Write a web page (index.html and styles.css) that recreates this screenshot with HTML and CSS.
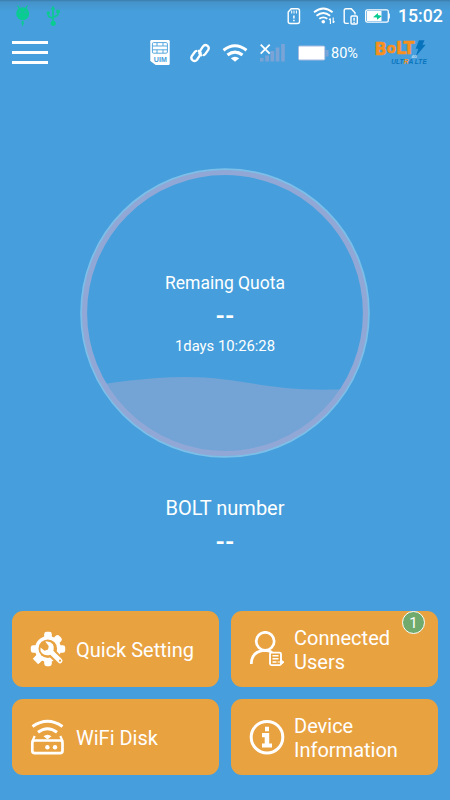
FILE: index.html
```html
<!DOCTYPE html>
<html lang="en">
<head>
<meta charset="utf-8">
<title>BOLT</title>
<link rel="stylesheet" href="styles.css">
</head>
<body>
<div class="status">
  <div class="status-left">
    <svg width="14" height="24" viewBox="16 4 14 24" fill="#0acb91"><circle cx="22.7" cy="13.7" r="6.5"/><path d="M17.5 5.5l2.5 4M27.5 5.5l-2.5 4" stroke="#0acb91" stroke-width="1.2"/><path d="M18.7 12h2.6M24 12h2.6" stroke="#469fdc" stroke-opacity=".6"/><path d="M21.5 21h2.2v3l-1 2.5-1-2.5z"/></svg>
    <svg width="14" height="24" viewBox="46 4 14 24" fill="none" stroke="#0acb91" stroke-width="1.7"><path d="M53 8v14M48.3 13v2.2q0 1.8 4.7 3M58 12v2q0 2-5 3"/><g fill="#0acb91" stroke="none"><circle cx="53.2" cy="23.3" r="2.6"/><circle cx="48.3" cy="13" r="1.7"/><path d="M56.3 9.7h3.5V13h-3.5zM53 5.7l2.4 3.7h-4.8z"/></g></svg>
  </div>
  <div class="status-right">
    <svg class="s-sd" width="14" height="18" viewBox="287 7 14 18" fill="none" stroke="#fff" stroke-width="1.4"><path d="M291.2 8.7h6.3q2 0 2 2v10.8q0 2-2 2h-7.3q-2 0-2-2V12z"/><path d="M291.7 10.5v3M294 10.5v3M296.4 10.5v3" stroke-width="1"/><path d="M293.9 15.5v3M293.9 19.8v1.4" stroke-width="1.5"/></svg>
    <svg class="s-wifi" width="22" height="18" viewBox="313 7 22 18" fill="none" stroke="#fff" stroke-width="1.8"><path d="M314 12.3q9.3-7.5 18.6 0M316.5 15.7q6.8-5.5 13.6 0M319.3 18.8q4-3 8 0"/><circle cx="323.3" cy="21.7" r="1.8" fill="#fff" stroke="none"/><path d="M330.4 24v-5.5M333.2 17.5v5.5M329 20l1.4-1.7M334.5 21.3l-1.3 1.6" stroke-width="1.1"/></svg>
    <svg class="s-sim" width="16" height="18" viewBox="343 7 16 18" fill="none" stroke="#fff" stroke-width="1.4"><path d="M348.8 23.4H346q-1.8 0-1.8-1.8v-11q0-1.8 1.8-1.8h5.3l3.7 4v1.6"/><rect x="351" y="16" width="6.3" height="8" rx="1"/><path d="M354.1 17.7v3M354.1 21.7v1.2"/></svg>
    <svg class="s-bat" width="26" height="15" viewBox="365 9 26 15"><rect x="365.7" y="9.8" width="22.6" height="12.4" rx="1.7" fill="none" stroke="#fff" stroke-width="1.3"/><path d="M367 11h14.5v10H367z" fill="#fff"/><path d="M388.6 13.5h1.2v5h-1.2z" fill="#fff"/><path d="M373 17.2l5-4.3v2.2l4 .8-5 3.8v-2.2z" fill="#0acb91"/></svg>
    <span class="time">15:02</span>
  </div>
</div>
<header class="bar">
  <div class="menu"><i></i><i></i><i></i></div>
  <div class="icons">
    <svg class="i-uim" width="20" height="26" viewBox="150 40 20 26"><path d="M151.5 40h17q1.2 0 1.2 1.2v22.6q0 1.2-1.2 1.2h-12.8l-5.4-4V41.2q0-1.2 1.2-1.2z" fill="#fff"/><g fill="none" stroke="#469fdc" stroke-width=".9"><rect x="152.4" y="42.6" width="15" height="10.6" rx="1.2"/><path d="M152.4 46h15M152.4 49.8h15M157 42.6v3.4M163 42.6v3.4M157 49.8v3.4M163 49.8v3.4"/></g><text class="uim" x="160.3" y="61.8" text-anchor="middle" textLength="13" lengthAdjust="spacingAndGlyphs">UIM</text></svg>
    <svg class="i-link" width="20" height="20" viewBox="190 43 20 20" fill="none" stroke="#fff" stroke-width="2.3" stroke-linecap="round"><path d="M201.3 55.2q-3.2-1.3-1.2-4.4l2.9-4.4q1.9-2.3 4.3-.7 2.3 1.8.9 4.2l-3 4.2q-.5.7-1.4 1"/><path d="M198.7 50.9q3.2 1.3 1.2 4.4l-2.9 4.4q-1.9 2.3-4.3.7-2.3-1.8-.9-4.2l3-4.2q.5-.7 1.4-1"/></svg>
    <svg class="i-wifi" width="26" height="18" viewBox="222 44 26 18" fill="none" stroke="#fff" stroke-width="3"><path d="M223.5 50.2q11.5-8.8 23 0M227.5 55q7.5-5.8 15 0"/><path d="M230.8 58.2q4.2-3 8.4 0l-4.2 3.6z" fill="#fff" stroke="none"/></svg>
    <svg class="i-signal" width="26" height="18" viewBox="259 44 26 18"><path d="M260 58h3.5v3.5H260zM265.3 55.4h3.7v6.1h-3.7zM270.5 51h3.7v10.5h-3.7zM275.7 47.5h3.7v14h-3.7zM281.2 44h3.6v17.5h-3.6z" fill="#7aa4d6"/><path d="M260.7 44.7l9 9M269.7 44.7l-9 9" stroke="#fff" stroke-width="1.8"/></svg>
    <svg class="i-bat" width="31" height="16" viewBox="298 44 31 16"><rect x="298" y="44.5" width="27.3" height="15" rx="2" fill="#a7badf"/><path d="M299 45.5h25.3v13H299z" fill="#fff"/><path d="M325.5 49h3v6.5h-3z" fill="#7aa4d6"/></svg>
    <span class="pct">80%</span>
    <svg class="i-logo" width="56" height="28" viewBox="373 39 56 28"><text class="bolt" x="374.5" y="54.5" textLength="40" lengthAdjust="spacingAndGlyphs"><tspan font-size="17">B</tspan><tspan font-size="14" dy="-2">o</tspan><tspan font-size="17" dy="1.5">LT</tspan></text><path d="M419 40.2h5.5l-2 4.5h3.2l-10 11.8 2.6-7.8h-2.7z" fill="#0873bd"/><text class="fourg" x="411.5" y="58.2">4G</text><text class="ultra" x="391.3" y="64.3" textLength="35.5" lengthAdjust="spacingAndGlyphs">ULT<tspan fill="#f7901d">R</tspan>A LTE</text></svg>
  </div>
</header>
<main>
  <section class="gauge">
    <svg class="wave" viewBox="80 168 290 290"><defs><clipPath id="inside"><circle cx="225" cy="313" r="141"/></clipPath></defs><path clip-path="url(#inside)" fill="#74a4d6" d="M80 387C107 384 145 377 185 377C245 377 269 393 350 389V460H80z"/><circle cx="225" cy="313" r="143.6" fill="none" stroke="#7cbfe8" stroke-width="2.4"/><circle cx="225" cy="313" r="140.5" fill="none" stroke="#91a8d6" stroke-width="5.2"/></svg>
    <div class="reading">
      <p class="quota">Remaing Quota</p>
      <p class="dash">--</p>
      <p class="days">1days 10:26:28</p>
    </div>
  </section>
  <section class="number">
    <p class="label">BOLT number</p>
    <p class="dash">--</p>
  </section>
</main>
<nav class="cards">
  <a class="card">
    <svg width="36" height="36" viewBox="0 0 36 36"><g fill="#fff"><circle cx="18" cy="18" r="13"/><rect x="14.2" y=".8" width="7.6" height="34.4" rx="2.4"/><rect x="14.2" y=".8" width="7.6" height="34.4" rx="2.4" transform="rotate(45 18 18)"/><rect x="14.2" y=".8" width="7.6" height="34.4" rx="2.4" transform="rotate(90 18 18)"/><path d="M18 18L5.5 30.5" stroke="#fff" stroke-width="7.6"/></g><circle cx="17.8" cy="17.7" r="9.3" fill="#e9a240"/><path d="M20 20l14 14" stroke="#e9a240" stroke-width="9"/><path d="M20 20l10 9.8" stroke="#fff" stroke-width="5" stroke-linecap="round"/><path d="M15.2 10.6q5-1 7.6 2.7 1.8 3.3.2 7.6l-3.2 3.1q-4.8 1.2-7.8-1.7-2.2-2.5-1.5-5.7l4 3.1 3.6-1.1.6-3.7z" fill="#fff"/><circle cx="30" cy="29.7" r="1.1" fill="#e9a240"/></svg>
    <span>Quick Setting</span>
  </a>
  <a class="card">
    <svg width="36" height="36" viewBox="0 0 36 36" fill="none" stroke="#fff"><circle cx="16.2" cy="10.3" r="9" stroke-width="2.7"/><path d="M2.3 33Q2.5 20 16 19.3q4 0 7 2" stroke-width="2.7"/><path d="M21.5 21.6h9q1.5 0 1.5 1.5v9.5q0 1.5-1.5 1.5h-8q-1.5 0-1.5-1.5v-9.5q0-1.5 1.5-1.5z" fill="#e9a240" stroke-width="1.9"/><path d="M23.5 24.7h6M23.5 27.8h6M23.5 31h4" stroke-width="1.5"/><path d="M28.5 31h3M31.5 28.5l3.5 2.7-3.5 2.7z" fill="#fff" stroke-width="1"/></svg>
    <span>Connected<br>Users</span>
    <b class="badge">1</b>
  </a>
  <a class="card">
    <svg width="36" height="36" viewBox="0 0 36 36" fill="none" stroke="#fff" stroke-width="2.7"><path d="M2.5 7.5q15-10.5 30 0M8 13.2q9.5-7 19 0" stroke-width="3"/><path d="M13.5 17.2q4-3 8 0l-4 3.4z" fill="#fff" stroke="none"/><path d="M4.7 17L2.3 22.5M30.3 17l2.4 5.5" stroke-width="2.2"/><rect x="2.3" y="21.5" width="30.2" height="12.7" rx="2.4"/><g fill="#fff" stroke="none"><circle cx="17.4" cy="28.2" r="2.2"/><circle cx="25" cy="28.2" r="2.2"/></g></svg>
    <span>WiFi Disk</span>
  </a>
  <a class="card">
    <svg width="36" height="36" viewBox="0 0 36 36" fill="#fff"><circle cx="18" cy="18.2" r="15.8" fill="none" stroke="#fff" stroke-width="3"/><path d="M16 7.8h4v4.4h-4zM13 14.1h7.2v10.5H23v4H13v-4h2.7v-6.4H13z"/></svg>
    <span>Device<br>Information</span>
  </a>
</nav>
</body>
</html>
```
FILE: styles.css
```css
* { box-sizing: border-box; }
body {
  margin: 0;
  width: 450px;
  height: 800px;
  overflow: hidden;
  display: flex;
  flex-direction: column;
  background: linear-gradient(#397ca9 0, #4593ca 2px, #469fdc 12px);
  color: #fff;
  font-family: Roboto, "Liberation Sans", sans-serif;
}
p { margin: 0; }
svg { display: block; flex: none; }
.status { height: 32px; display: flex; justify-content: space-between; padding: 4px 8px 0 16px; }
.status-left { display: flex; gap: 16px; }
.status-right { display: flex; align-items: flex-start; padding-top: 3px; }
.s-wifi { margin-left: 12px; }
.s-sim { margin-left: 8px; }
.s-bat { margin: 2px 7px 0 6px; }
.time { width: 44px; font-size: 17.7px; line-height: 19px; font-weight: 500; white-space: nowrap; }
.bar { height: 42px; display: flex; justify-content: space-between; align-items: flex-start; padding: 7px 21px 0 12px; }
.menu { width: 36px; display: flex; flex-direction: column; gap: 7px; padding-top: 2px; }
.menu i { height: 3px; background: #fff; }
.icons { display: flex; align-items: center; height: 28px; }
.i-link { margin-left: 20px; }
.i-wifi { margin-left: 12px; }
.i-signal { margin-left: 11px; }
.i-bat { margin-left: 13px; }
.pct { width: 27px; margin: 0 15px 0 2px; padding-top: 1px; font-size: 14.5px; line-height: 20px; }
.uim { font: bold 7px "Liberation Sans", sans-serif; fill: #469fdc; }
.bolt { font-family: "DejaVu Sans", sans-serif; font-weight: bold; fill: #f7901d; stroke: #f7901d; stroke-width: .6; stroke-linejoin: round; }
.fourg { font: italic bold 4px "Liberation Sans", sans-serif; fill: #c5dff1; }
.ultra { font: italic bold 7px "Liberation Sans", sans-serif; fill: #0873bd; }
main { flex: 1; display: flex; flex-direction: column; align-items: center; padding-top: 94px; }
.gauge { display: grid; width: 290px; height: 290px; }
.wave, .reading { grid-area: 1 / 1; }
.wave { width: 290px; height: 290px; }
.reading { text-align: center; padding-top: 103px; }
.quota { font-size: 17.5px; line-height: 24px; }
.dash { font-size: 24px; line-height: 32px; font-weight: 700; }
.reading .dash { margin-top: 5px; }
.days { font-size: 14.8px; line-height: 20px; margin-top: 4px; }
.number { text-align: center; padding-top: 36px; }
.label { font-size: 20px; line-height: 28px; }
.number .dash { margin-top: 4px; }
.cards { display: grid; grid-template-columns: 207px 207px; grid-auto-rows: 76px; gap: 12px; padding: 0 12px 25px; }
.card { position: relative; display: flex; align-items: center; gap: 10px; padding-left: 18px; border-radius: 11px; background: #e9a240; font-size: 20px; line-height: 24px; }
.card span { padding-top: 1px; white-space: nowrap; }
.card:nth-child(even) { gap: 9px; }
.badge { position: absolute; top: 0; right: 13px; width: 23px; height: 23px; border: 1.5px solid #fff; border-radius: 50%; background: #70aa6d; font-size: 15px; font-weight: 400; line-height: 22px; text-align: center; }
```
